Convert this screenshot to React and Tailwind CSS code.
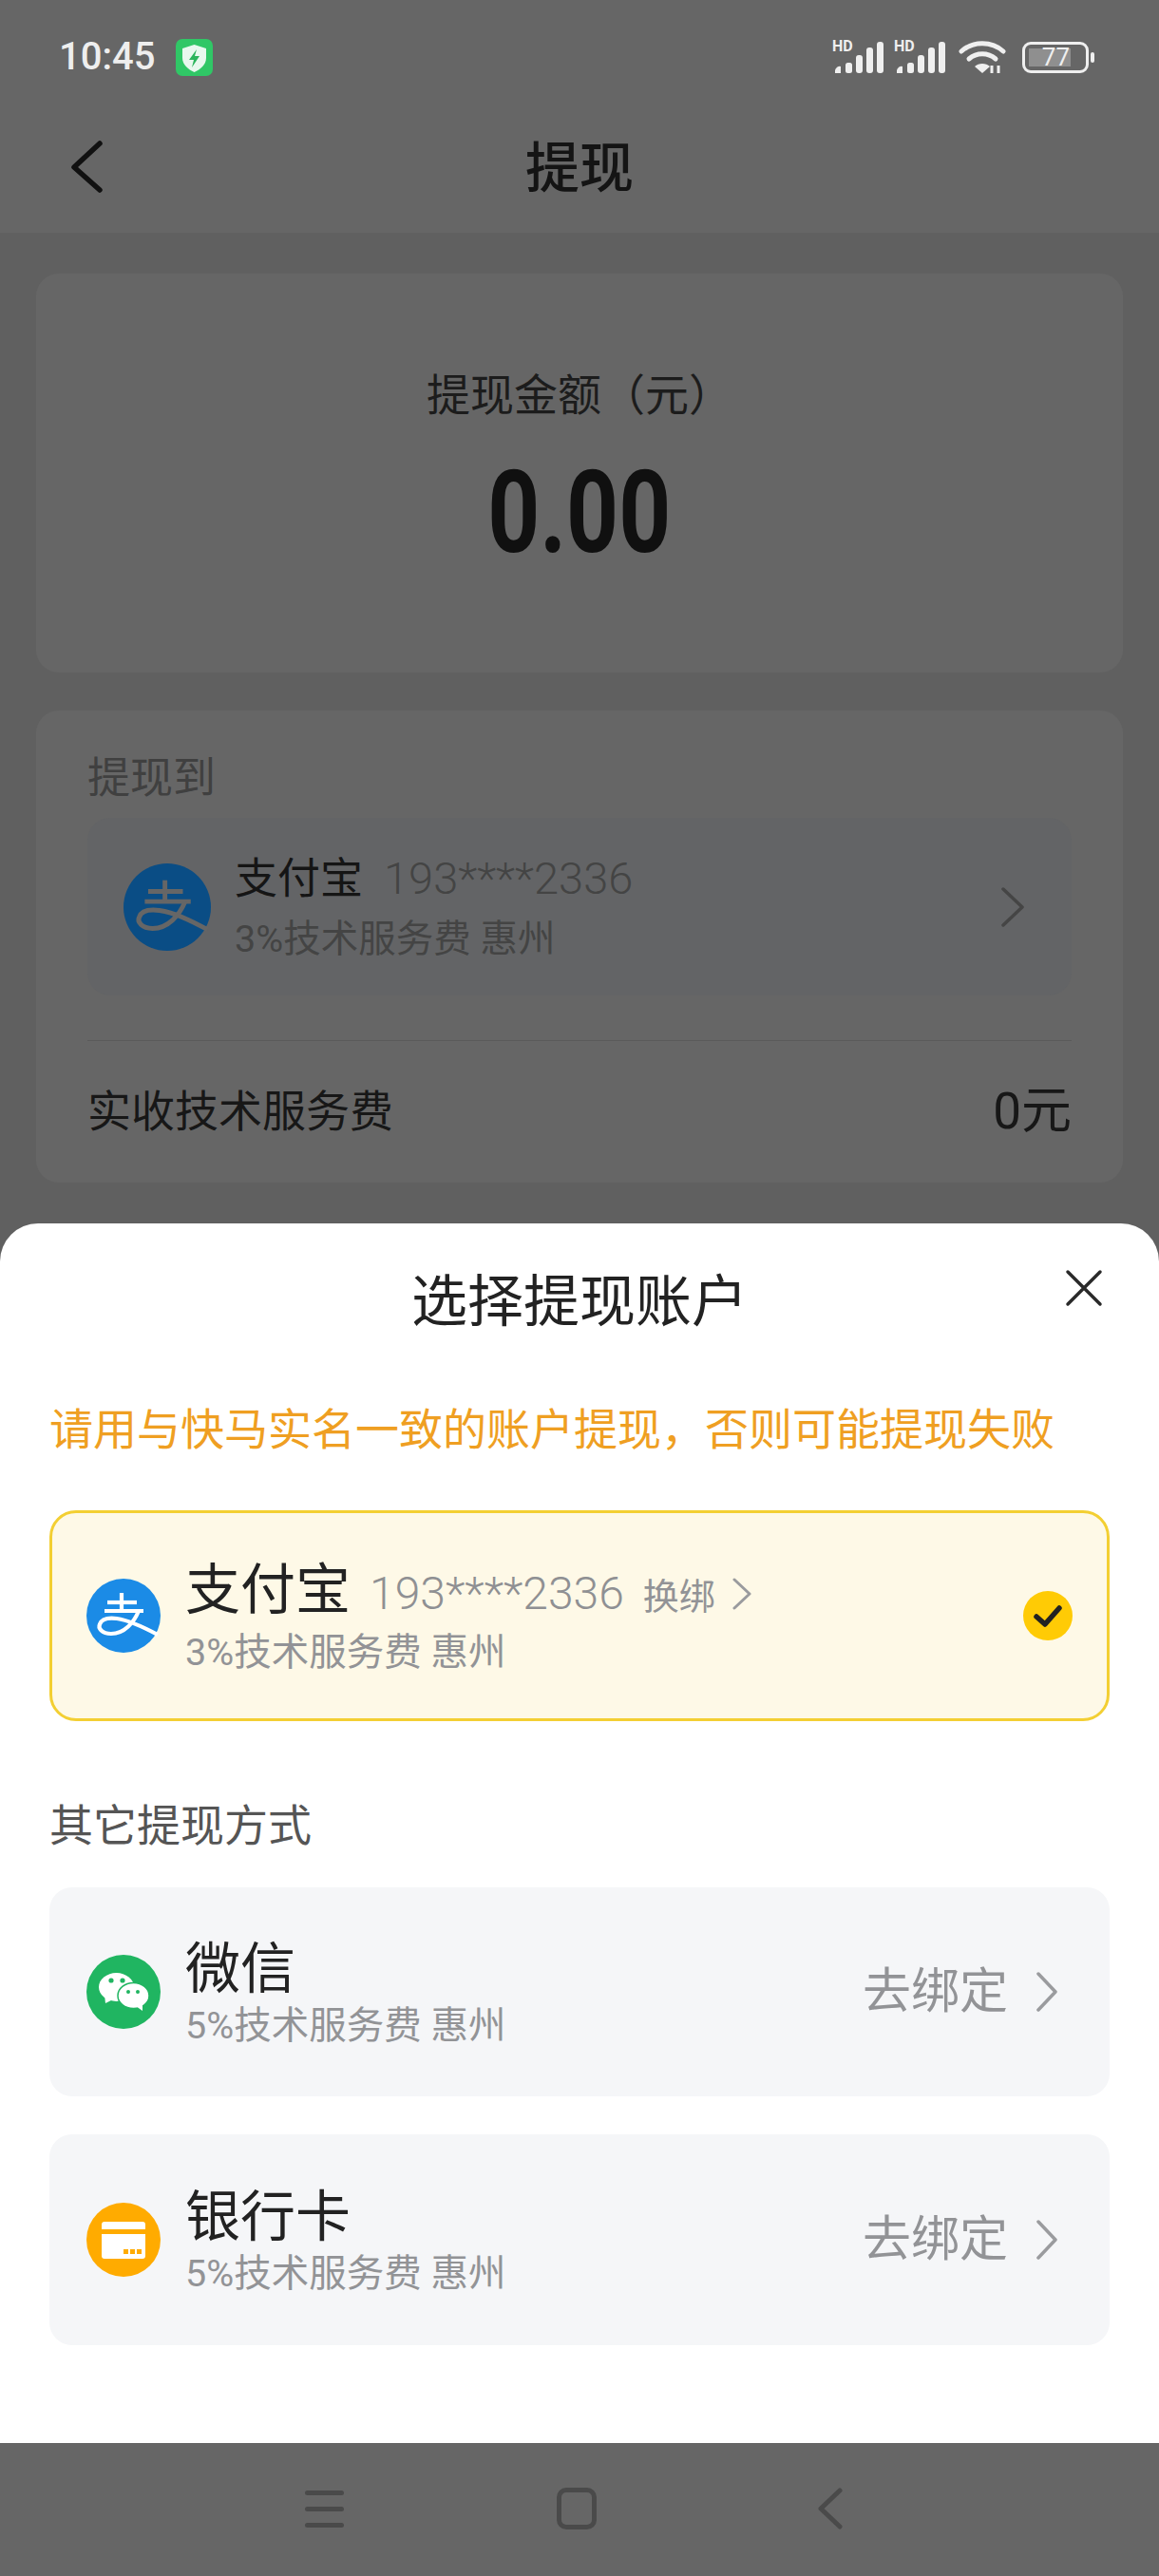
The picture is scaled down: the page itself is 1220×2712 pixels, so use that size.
import React from "react";

const F = { fontFamily: 'Roboto, "Noto Sans CJK SC", sans-serif' };

function Alipay({ size = 78, bg = "#1b8be6", fg = "#ffffff" }) {
  return (
    <svg width={size} height={size} viewBox="0 0 78 78" className="shrink-0">
      <circle cx="39" cy="39" r="39" fill={bg} />
      <g fill="none" stroke={fg} strokeWidth="4.2">
        <path d="M22 25H53" />
        <path d="M37 15V34" />
        <path d="M19 34H60" />
        <path d="M55 34C50 46 40 58 26 58C16 58 12 52 14 48C16 42 24 41 32 42C46 44 60 51 75 59" />
      </g>
    </svg>
  );
}

function Wechat({ size = 78 }) {
  return (
    <svg width={size} height={size} viewBox="0 0 78 78" className="shrink-0">
      <circle cx="39" cy="39" r="39" fill="#20b561" />
      <ellipse cx="31.5" cy="34" rx="18.5" ry="15" fill="#ffffff" />
      <path d="M19 42L20 51L28 47Z" fill="#ffffff" />
      <ellipse cx="49.5" cy="43" rx="16.5" ry="13.5" fill="#ffffff" stroke="#20b561" strokeWidth="1.5" />
      <path d="M52 54L59 59L59 50Z" fill="#ffffff" />
      <circle cx="26" cy="27" r="2.6" fill="#20b561" />
      <circle cx="38" cy="27" r="2.6" fill="#20b561" />
      <circle cx="44" cy="39" r="2" fill="#20b561" />
      <circle cx="54" cy="39" r="2" fill="#20b561" />
    </svg>
  );
}

function Bank({ size = 78 }) {
  return (
    <svg width={size} height={size} viewBox="0 0 78 78" className="shrink-0">
      <circle cx="39" cy="39" r="39" fill="#ffab00" />
      <path d="M16 23a3 3 0 0 1 3-3H59a3 3 0 0 1 3 3V28H16Z" fill="#ffffff" />
      <path d="M16 33H62V56a3 3 0 0 1-3 3H19a3 3 0 0 1-3-3Z" fill="#ffffff" />
      <rect x="39" y="49" width="5" height="5" fill="#ffab00" />
      <rect x="46" y="49" width="5" height="5" fill="#ffab00" />
      <rect x="53" y="49" width="5" height="5" fill="#ffab00" />
    </svg>
  );
}

function Chevron({ w = 22, h = 42, color = "#9a9b9e", sw = 3.5 }) {
  return (
    <svg width={w} height={h} viewBox={`0 0 ${w} ${h}`} className="shrink-0">
      <path d={`M2 2L${w - 2} ${h / 2}L2 ${h - 2}`} fill="none" stroke={color} strokeWidth={sw} strokeLinecap="round" strokeLinejoin="round" />
    </svg>
  );
}

function Signal() {
  return (
    <svg width="54" height="44" viewBox="0 0 54 44" className="shrink-0" fill="#efefef">
      <text x="0" y="16" fontSize="16" fontWeight="700" fontFamily="Roboto, sans-serif">HD</text>
      <path d="M3 39v-3a5 5 0 0 1 6-4V39Z" />
      <rect x="14" y="28" width="7" height="11" rx="2.5" />
      <rect x="25" y="20" width="7" height="19" rx="3" />
      <rect x="36" y="12" width="7" height="27" rx="3" />
      <rect x="47" y="6" width="7" height="33" rx="3" />
    </svg>
  );
}

function StatusBar() {
  return (
    <div className="flex h-[120px] items-center justify-between pl-[62px] pr-[68px]">
      <div className="flex items-center gap-[22px]">
        <span className="text-[40px] leading-[60px] font-medium text-[#eeeeee]">10:45</span>
        <svg width="39" height="39" viewBox="0 0 39 39" className="shrink-0">
          <rect width="39" height="39" rx="7" fill="#30c766" />
          <path d="M19.5 6L32 10V20C32 27 26 32 19.5 35C13 32 7 27 7 20V10Z" fill="#e8f8ee" />
          <path d="M22 11L14 22H19L17 30L25 18H20Z" fill="#2bb45c" />
        </svg>
      </div>
      <div className="flex items-center">
        <Signal />
        <span className="w-[11px]" />
        <Signal />
        <span className="w-[14px]" />
        <svg width="50" height="36" viewBox="0 0 50 36" className="shrink-0">
          <g fill="none" stroke="#efefef" strokeWidth="5" strokeLinecap="round">
            <path d="M3 12C15 1 35 1 47 12" />
            <path d="M11 20C19 13 31 13 39 20" />
          </g>
          <path d="M25 35L17 28C21 24 29 24 33 28Z" fill="#efefef" />
          <path d="M35 35V27M42 35V27" stroke="#efefef" strokeWidth="3" />
        </svg>
        <span className="w-[17px]" />
        <div className="flex h-[33px] w-[70px] items-center rounded-[9px] border-[3px] border-[#efefef] p-[4px]">
          <div className="flex h-full w-[44px] items-center justify-end bg-[#8f8f8f] pr-[1px]">
            <span className="text-[26px] leading-none text-[#efefef]">77</span>
          </div>
        </div>
        <span className="ml-[2px] h-[11px] w-[4px] rounded-full bg-[#efefef]" />
      </div>
    </div>
  );
}

function Row({ icon, title, sub, extra, right, className }) {
  return (
    <div className={className}>
      <div className="mr-[26px] ml-[36px]">{icon}</div>
      <div className="flex-1">
        <div className="flex items-baseline">
          <span className="text-[58px] leading-[68px] text-[#222222]">{title}</span>
          {extra}
        </div>
        <div className="mt-[3px] text-[39.5px] leading-[46px] text-[#929396]">{sub}</div>
      </div>
      {right}
    </div>
  );
}

function Unbind() {
  return (
    <div className="flex items-center gap-[30px] pr-[52px]">
      <span className="text-[51px] leading-[60px] text-[#929396]">去绑定</span>
      <Chevron />
    </div>
  );
}

export default function App() {
  return (
    <div style={F} className="relative h-[2712px] w-[1220px] overflow-hidden bg-[#606060]">
      <div className="bg-[#666666]">
        <StatusBar />
        <div className="relative flex h-[125px] items-center justify-center pb-[10px]">
          <svg width="40" height="60" viewBox="0 0 40 60" className="absolute left-[72px] top-[25px]">
            <path d="M33 6L6 31L33 55" fill="none" stroke="#111111" strokeWidth="5.5" strokeLinecap="round" strokeLinejoin="round" />
          </svg>
          <span className="text-[57px] leading-[70px] font-medium text-[#141414]">提现</span>
        </div>
      </div>
      <div className="flex flex-col gap-[40px] px-[38px] pt-[43px]">
        <div className="flex h-[420px] flex-col items-center rounded-[24px] bg-[#666666] pt-[101px]">
          <div className="text-[46px] leading-[54px] text-[#1c1c1c]">提现金额（元）</div>
          <div className="mt-[32px] scale-x-[0.8] text-[120px] leading-[130px] font-bold text-[#101010]">0.00</div>
        </div>
        <div className="flex h-[497px] flex-col rounded-[24px] bg-[#666666] px-[54px] pt-[45px]">
          <div className="text-[45px] leading-[54px] text-[#404040]">提现到</div>
          <div className="mt-[14px] flex h-[187px] items-center rounded-[24px] bg-[#636466] pl-[38px] pr-[50px]">
            <Alipay size={92} bg="#0a4d85" fg="#666666" />
            <div className="ml-[25px] flex-1">
              <div className="flex items-baseline">
                <span className="text-[45px] leading-[58px] text-[#151515]">支付宝</span>
                <span className="ml-[22px] text-[47px] leading-[58px] font-light text-[#444444]">193****2336</span>
              </div>
              <div className="mt-[9px] text-[39.5px] leading-[50px] text-[#444444]">3%技术服务费 惠州</div>
            </div>
            <Chevron w={24} h={42} color="#454545" />
          </div>
          <div className="mt-[47px] h-[1px] bg-[#5a5a5a]" />
          <div className="flex flex-1 items-center justify-between text-[46px] text-[#171717]">
            <span>实收技术服务费</span>
            <span className="text-[53px]">0元</span>
          </div>
        </div>
      </div>

      <div className="absolute inset-x-0 top-[1288px] h-[1284px] rounded-t-[40px] bg-white px-[52px]">
        <div className="relative flex h-[128px] items-center justify-center pt-[38px]">
          <span className="text-[59px] leading-[70px] text-[#222222]">选择提现账户</span>
          <svg width="40" height="40" viewBox="0 0 40 40" className="absolute right-[7px] top-[48px]">
            <path d="M3 3L37 37M37 3L3 37" stroke="#2a2a2a" strokeWidth="3.5" strokeLinecap="round" />
          </svg>
        </div>
        <div className="mt-[59px] text-[46px] leading-[60px] text-[#ef9f22]">请用与快马实名一致的账户提现，否则可能提现失败</div>
        <Row
          className="mt-[55px] flex h-[222px] items-center rounded-[28px] border-[3px] border-[#f3cf33] bg-[#fef9e7]"
          icon={<Alipay />}
          title="支付宝"
          extra={
            <span className="ml-[20px] flex items-baseline">
              <span className="text-[48px] font-light text-[#8f9093]">193****2336</span>
              <span className="ml-[20px] text-[38px] text-[#929396]">换绑</span>
              <span className="ml-[18px] self-center"><Chevron w={20} h={34} sw={3} /></span>
            </span>
          }
          sub="3%技术服务费 惠州"
          right={
            <svg width="52" height="52" viewBox="0 0 52 52" className="mr-[36px] shrink-0">
              <circle cx="26" cy="26" r="26" fill="#ffcb05" />
              <path d="M14 27L23 35L38 18" fill="none" stroke="#222222" strokeWidth="5.5" strokeLinecap="round" strokeLinejoin="round" />
            </svg>
          }
        />
        <div className="mt-[80px] text-[46px] leading-[60px] text-[#555555]">其它提现方式</div>
        <Row
          className="mt-[35px] flex h-[220px] items-center rounded-[24px] border-[3px] border-transparent bg-[#f5f6f8]"
          icon={<Wechat />}
          title="微信"
          sub="5%技术服务费 惠州"
          right={<Unbind />}
        />
        <Row
          className="mt-[40px] flex h-[222px] items-center rounded-[24px] border-[3px] border-transparent bg-[#f5f6f8]"
          icon={<Bank />}
          title="银行卡"
          sub="5%技术服务费 惠州"
          right={<Unbind />}
        />
      </div>

      <div className="absolute inset-x-0 bottom-0 flex h-[140px] items-center bg-[#666666] pb-[2px] pl-[321px]">
        <div className="flex w-[41px] flex-col gap-[12px]">
          <span className="h-[5px] rounded-full bg-[#4a4a4a]" />
          <span className="h-[5px] rounded-full bg-[#4a4a4a]" />
          <span className="h-[5px] rounded-full bg-[#4a4a4a]" />
        </div>
        <div className="ml-[224px] h-[44px] w-[42px] rounded-[10px] border-[5px] border-[#4a4a4a]" />
        <svg width="27" height="44" viewBox="0 0 27 44" className="ml-[232px]">
          <path d="M24 3L4 22L24 41" fill="none" stroke="#4a4a4a" strokeWidth="5" strokeLinecap="round" strokeLinejoin="round" />
        </svg>
      </div>
    </div>
  );
}
